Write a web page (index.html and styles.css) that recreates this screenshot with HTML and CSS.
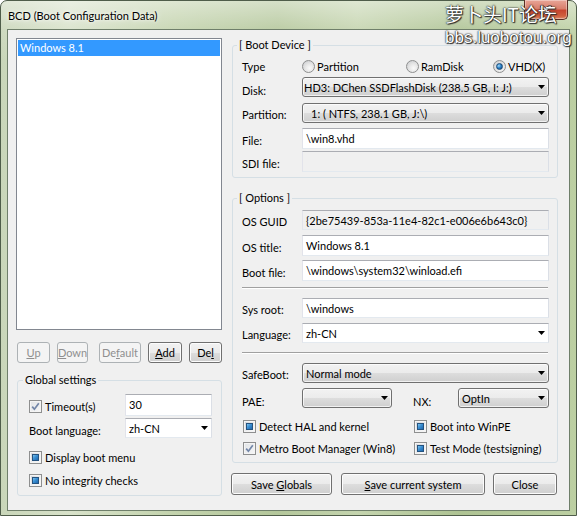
FILE: index.html
```html
<!DOCTYPE html>
<html>
<head>
<meta charset="utf-8">
<title>BCD</title>
<link rel="stylesheet" href="styles.css">
</head>
<body>
<div class="window">
  <div class="titlebar">
    <span class="title">BCD (Boot Configuration Data)</span>
    <div class="close">
      <svg width="12" height="10" viewBox="0 0 12 10"><path d="M2 1.5 L10 8.5 M10 1.5 L2 8.5" stroke="#3a2520" stroke-width="3.4" stroke-linecap="round"/><path d="M2 1.5 L10 8.5 M10 1.5 L2 8.5" stroke="#fff" stroke-width="2" stroke-linecap="round"/></svg>
    </div>
  </div>
  <div class="watermark">
    <div class="wm1">萝卜头IT论坛</div>
    <div class="wm2">bbs.luobotou.org</div>
  </div>
  <div class="client">
    <div class="left">
      <div class="listbox">
        <div class="item sel">Windows 8.1</div>
      </div>
      <div class="btnrow">
        <div class="btn dis b-up"><span><u>U</u>p</span></div>
        <div class="btn dis b-down"><span><u>D</u>own</span></div>
        <div class="btn dis b-default"><span>De<u>f</u>ault</span></div>
        <div class="btn b-add"><span><u>A</u>dd</span></div>
        <div class="btn b-del"><span>De<u>l</u></span></div>
      </div>
      <fieldset class="group global">
        <legend>Global settings</legend>
        <div class="grow g-timeout">
          <div class="chk glabel"><span class="cb checked"><svg width="11" height="11" viewBox="0 0 11 11"><path d="M2.2 5.6 L4.4 8.2 L8.8 2.2" fill="none" stroke="#7286a8" stroke-width="1.7"/></svg></span><span>Timeout(s)</span></div>
          <div class="edit gfield">30</div>
        </div>
        <div class="grow g-lang">
          <div class="glabel lbltxt">Boot language:</div>
          <div class="wcombo gfield">zh-CN</div>
        </div>
        <div class="chk g-menu"><span class="cb ind"></span><span>Display boot menu</span></div>
        <div class="chk g-integ"><span class="cb ind"></span><span>No integrity checks</span></div>
      </fieldset>
    </div>
    <div class="right">
      <fieldset class="group device">
        <legend>[ Boot Device ]</legend>
        <div class="row r-type">
          <div class="lbl">Type</div>
          <div class="radios">
            <div class="radio"><span class="rb"></span><span>Partition</span></div>
            <div class="radio"><span class="rb"></span><span>RamDisk</span></div>
            <div class="radio"><span class="rb on"></span><span>VHD(X)</span></div>
          </div>
        </div>
        <div class="row r-disk">
          <div class="lbl low">Disk:</div>
          <div class="combo ctl">HD3: DChen SSDFlashDisk (238.5 GB, I: J:)</div>
        </div>
        <div class="row r-part">
          <div class="lbl">Partition:</div>
          <div class="combo ctl pad-part">1: ( NTFS, 238.1 GB, J:\)</div>
        </div>
        <div class="row r-file">
          <div class="lbl">File:</div>
          <div class="edit ctl">\win8.vhd</div>
        </div>
        <div class="row r-sdi">
          <div class="lbl">SDI file:</div>
          <div class="edit ctl ro"></div>
        </div>
      </fieldset>
      <fieldset class="group options">
        <legend>[ Options ]</legend>
        <div class="row r-guid">
          <div class="lbl">OS GUID</div>
          <div class="edit ctl ro">{2be75439-853a-11e4-82c1-e006e6b643c0}</div>
        </div>
        <div class="row r-title">
          <div class="lbl">OS title:</div>
          <div class="edit ctl">Windows 8.1</div>
        </div>
        <div class="row r-boot">
          <div class="lbl">Boot file:</div>
          <div class="edit ctl">\windows\system32\winload.efi</div>
        </div>
        <div class="sep s1"></div>
        <div class="row r-sys">
          <div class="lbl">Sys root:</div>
          <div class="edit ctl">\windows</div>
        </div>
        <div class="row r-lang">
          <div class="lbl">Language:</div>
          <div class="wcombo ctl">zh-CN</div>
        </div>
        <div class="sep s2"></div>
        <div class="row r-safe">
          <div class="lbl">SafeBoot:</div>
          <div class="combo ctl">Normal mode</div>
        </div>
        <div class="row r-pae">
          <div class="lbl low">PAE:</div>
          <div class="combo pae"></div>
          <div class="lbl low nxl">NX:</div>
          <div class="combo nx">OptIn</div>
        </div>
        <div class="chkgrid c1">
          <div class="chk"><span class="cb ind"></span><span>Detect HAL and kernel</span></div>
          <div class="chk"><span class="cb ind"></span><span>Boot into WinPE</span></div>
        </div>
        <div class="chkgrid c2">
          <div class="chk"><span class="cb checked"><svg width="11" height="11" viewBox="0 0 11 11"><path d="M2.2 5.6 L4.4 8.2 L8.8 2.2" fill="none" stroke="#7286a8" stroke-width="1.7"/></svg></span><span>Metro Boot Manager (Win8)</span></div>
          <div class="chk"><span class="cb ind"></span><span>Test Mode (testsigning)</span></div>
        </div>
      </fieldset>
      <div class="actions">
        <div class="btn a-glob"><span>Save <u>G</u>lobals</span></div>
        <div class="btn a-cur"><span><u>S</u>ave current system</span></div>
        <div class="btn a-close"><span>Close</span></div>
      </div>
    </div>
  </div>
</div>
</body>
</html>
```
FILE: styles.css
```css
* { box-sizing: border-box; margin: 0; padding: 0; }
html, body { width: 577px; height: 516px; overflow: hidden; }
body {
  font-family: Lato, "Segoe UI", "Noto Sans", sans-serif;
  font-size: 11px;
  color: #000;
  background: #fff;
}

/* ---------- window frame ---------- */
.window {
  position: relative;
  width: 577px;
  height: 516px;
  border: 1px solid #4f5d4a;
  border-radius: 7px 7px 0 0;
  padding: 0 6px 4px 6px;
  display: flex;
  flex-direction: column;
  background:
    linear-gradient(180deg, rgba(255,255,255,0.45) 0px, rgba(255,255,255,0.1) 30px, rgba(255,255,255,0) 60px),
    linear-gradient(90deg, #c9d6b9 0%, #d8e2ca 12%, #c3d3ad 30%, #b4c79b 48%, #c4d4ae 62%, #aec393 80%, #bccfa2 100%);
}
.titlebar {
  height: 28px;
  display: flex;
  align-items: center;
  padding-left: 1px;
  flex: none;
}
.title {
  font-size: 11px;
  text-shadow: 0 0 6px rgba(255,255,255,0.9), 0 0 3px rgba(255,255,255,0.9);
}
.close {
  position: absolute;
  top: -1px;
  right: 8px;
  width: 44px;
  height: 20px;
  border: 1px solid #5a2d24;
  border-top: none;
  border-radius: 0 0 5px 5px;
  background: linear-gradient(180deg, #e8a597 0%, #d9806d 45%, #c7452f 55%, #d0603f 85%, #e09070 100%);
  box-shadow: inset 0 0 0 1px rgba(255,255,255,0.35);
  display: flex;
  align-items: center;
  justify-content: center;
}
.watermark {
  position: absolute;
  left: 444px;
  top: 2px;
  color: #fff;
  text-shadow: 0 0 2px #1d1d1d, 0 0 1px #000, 1px 1px 1px #333;
}
.wm1 {
  font-family: "Noto Sans CJK SC", sans-serif;
  font-size: 19px;
  line-height: 22px;
}
.wm2 {
  font-family: "Liberation Sans", Arial, sans-serif;
  font-size: 17px;
  line-height: 20px;
  margin-top: 3px;
}

/* ---------- client ---------- */
.client {
  flex: 1;
  display: flex;
  gap: 9px;
  background: #f0f0f0;
  border: 1px solid #6f7f6a;
  padding: 8px 11px 0 8px;
}
.left {
  width: 206px;
  flex: none;
  display: flex;
  flex-direction: column;
}
.right {
  width: 327px;
  flex: none;
  display: flex;
  flex-direction: column;
}

.listbox {
  height: 292px;
  border: 1px solid #828790;
  background: #fff;
  padding: 1px;
}
.item {
  height: 16px;
  line-height: 16px;
  padding-left: 2px;
}
.item.sel { background: #3399ff; color: #fff; }

/* ---------- buttons ---------- */
.btn {
  height: 21px;
  border: 1px solid #707070;
  border-radius: 3px;
  background: linear-gradient(180deg, #f2f2f2 0%, #ebebeb 50%, #dddddd 51%, #cfcfcf 100%);
  box-shadow: inset 0 0 0 1px #fcfcfc;
  display: flex;
  align-items: center;
  justify-content: center;
  flex: none;
  white-space: nowrap;
}
.btn.dis {
  border-color: #adb2b5;
  background: #f4f4f4;
  box-shadow: none;
  color: #8f8f8f;
}
.btnrow {
  display: flex;
  margin-top: 12px;
  height: 21px;
}
.b-up { width: 33px; margin-left: 1px; }
.b-down { width: 31px; margin-left: 7px; }
.b-default { width: 42px; margin-left: 11px; }
.b-add { width: 34px; margin-left: 7px; }
.b-del { width: 33px; margin-left: 7px; }

/* ---------- group boxes ---------- */
.group {
  border: 1px solid #d5dfe5;
  border-radius: 3px;
  min-width: 0;
}
.group legend {
  line-height: 14px;
  padding: 0 2px;
  margin-left: -5px;
}
.global legend { margin-left: -6px; }
.global {
  margin-top: 10px;
  margin-left: 1px;
  padding: 0 9px 7px 11px;
}
.grow {
  display: flex;
  align-items: center;
}
.glabel { width: 96px; flex: none; }
.gfield { width: 87px; }
.g-timeout { margin-top: 7px; height: 22px; }
.g-timeout .gfield { height: 22px; }
.g-timeout .glabel { padding-top: 2px; }
.g-lang { margin-top: 2px; height: 20px; }
.g-lang .lbltxt { padding-top: 4px; }
.g-menu { margin-top: 11px; }
.g-integ { margin-top: 7px; }

.device {
  margin-left: 1px;
  padding: 6px 8px 5px 9px;
}
.options {
  margin-left: 1px;
  margin-top: 13px;
  padding: 0 8px 6px 9px;
}

.row { display: flex; align-items: center; }
.lbl { width: 60px; flex: none; padding-top: 3px; }
.lbl.low { padding-top: 7px; }
.ctl { width: 247px; flex: none; }

.r-type { height: 16px; }
.r-type .lbl { padding-top: 1px; }
.r-disk { margin-top: 3px; height: 20px; }
.r-part { margin-top: 6px; height: 20px; }
.r-file { margin-top: 5px; height: 21px; }
.r-sdi { margin-top: 2px; height: 21px; }
.r-guid { margin-top: 5px; height: 20px; }
.r-title { margin-top: 5px; height: 21px; }
.r-boot { margin-top: 4px; height: 21px; }
.s1 { margin-top: 6px; }
.r-sys { margin-top: 9px; height: 20px; }
.r-lang { margin-top: 5px; height: 20px; }
.s2 { margin-top: 9px; }
.r-safe { margin-top: 9px; height: 20px; }
.r-pae { margin-top: 5px; height: 20px; }
.c1 { margin-top: 10px; }
.c2 { margin-top: 6px; }

.row > div { height: 100%; }
.row > .lbl { height: auto; }

.sep {
  height: 2px;
  width: 306px;
  border-top: 1px solid #a0a0a0;
  border-bottom: 1px solid #ffffff;
}

/* ---------- fields ---------- */
.edit {
  border: 1px solid;
  border-color: #abadb3 #dbdfe6 #e3e9ef #e2e3ea;
  background: #fff;
  padding: 3px 3px 0 3px;
  white-space: nowrap;
  overflow: hidden;
}
.edit.ro { background: #f0f0f0; }
.combo, .wcombo {
  position: relative;
  display: flex;
  align-items: center;
  white-space: nowrap;
  padding-left: 3px;
}
.combo {
  border: 1px solid #707070;
  border-radius: 3px;
  background: linear-gradient(180deg, #f2f2f2 0%, #ebebeb 50%, #dddddd 51%, #cfcfcf 100%);
  box-shadow: inset 0 0 0 1px rgba(255,255,255,0.7);
}
.wcombo {
  border: 1px solid;
  border-color: #abadb3 #dbdfe6 #e3e9ef #e2e3ea;
  background: #fff;
  height: 20px;
}
.combo::after, .wcombo::after {
  content: "";
  position: absolute;
  right: 3px;
  top: 50%;
  margin-top: -2px;
  width: 7px;
  height: 4px;
  background: #000;
  clip-path: polygon(0 0, 100% 0, 50% 100%);
}
.r-disk .combo { padding-left: 1px; }
.pad-part { padding-left: 8px; }
.pae { width: 90px; flex: none; }
.nxl { width: 45px; margin-left: 21px; }
.nx { width: 91px; flex: none; }

/* ---------- checkboxes & radios ---------- */
.chk {
  display: flex;
  align-items: center;
  height: 16px;
  gap: 3px;
  white-space: nowrap;
}
.cb {
  width: 13px;
  height: 13px;
  flex: none;
  border: 1px solid #8e8f8f;
  background: linear-gradient(135deg, #cfd2d6 0%, #eeeff0 60%, #fafafa 100%);
  box-shadow: inset 0 0 0 1px #f4f4f4;
  position: relative;
  display: flex;
  align-items: center;
  justify-content: center;
}
.cb.checked { background: linear-gradient(135deg, #e0e3e6, #f7f7f7); }
.cb.ind::after {
  content: "";
  position: absolute;
  left: 2px; top: 2px; right: 2px; bottom: 2px;
  border: 1px solid #24527f;
  background: linear-gradient(135deg, #7fc5ef 0%, #3a8fd2 45%, #1f67ad 100%);
}
.chkgrid {
  display: grid;
  grid-template-columns: 171px auto;
  padding-left: 1px;
}

.radios {
  display: grid;
  grid-template-columns: 104px 87px auto;
  height: 16px;
  align-items: center;
}
.radio { display: flex; align-items: center; gap: 2px; }
.rb {
  width: 13px;
  height: 13px;
  border-radius: 50%;
  border: 1px solid #8e8f8f;
  background: radial-gradient(circle at 60% 65%, #fafafa 0%, #e6e6e6 45%, #c4c6ca 100%);
  position: relative;
  flex: none;
}
.rb.on::after {
  content: "";
  position: absolute;
  left: 2px; top: 2px; width: 7px; height: 7px;
  border-radius: 50%;
  background: radial-gradient(circle at 35% 35%, #a9dcf8 0%, #2f86cc 45%, #0f3f74 100%);
  border: 1px solid #1d4b77;
  box-sizing: border-box;
}

/* ---------- bottom actions ---------- */
.actions {
  display: flex;
  margin-top: 10px;
  height: 22px;
}
.actions .btn { height: 22px; }
.a-glob { width: 101px; }
.a-cur { width: 144px; margin-left: 9px; }
.a-close { width: 64px; margin-left: 8px; }
```
